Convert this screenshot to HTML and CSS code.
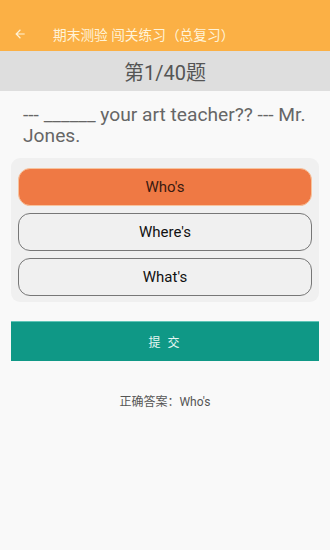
FILE: index.html
```html
<!DOCTYPE html>
<html lang="zh">
<head>
<meta charset="utf-8">
<link rel="stylesheet" href="styles.css">
</head>
<body>
<header class="appbar">
  <svg class="back" width="14" height="14" viewBox="0 0 24 24"><path d="M20 11H7.83l5.59-5.59L12 4l-8 8 8 8 1.41-1.41L7.83 13H20v-2z" fill="#fff3d8"/></svg>
  <span class="title">期末测验 闯关练习（总复习）</span>
</header>
<div class="progress">第1/40题</div>
<main class="content">
  <p class="question">--- ______ your art teacher?? --- Mr. Jones.</p>
  <div class="options">
    <div class="option selected">Who's</div>
    <div class="option">Where's</div>
    <div class="option">What's</div>
  </div>
  <button class="submit">提 交</button>
  <p class="answer">正确答案：Who's</p>
</main>
</body>
</html>
```

FILE: styles.css
```css
html, body { margin: 0; padding: 0; }
body {
  width: 330px;
  height: 550px;
  background: #f9f9f9;
  font-family: Roboto, "Noto Sans CJK SC", sans-serif;
  overflow: hidden;
}
.appbar {
  height: 51px;
  background: #fbb045;
  display: flex;
  align-items: center;
  padding: 0 0 0 13px;
  box-sizing: border-box;
  padding-top: 16px;
}
.back { flex: none; }
.title {
  margin-left: 26px;
  color: #fff3d8;
  font-size: 13.7px;
}
.progress {
  height: 40px;
  background: #dedede;
  color: #555;
  font-size: 20px;
  display: flex;
  align-items: center;
  justify-content: center;
}
.content { padding: 0 11px; }
.question {
  margin: 13px 0 0 12px;
  font-size: 19.2px;
  line-height: 21px;
  color: #666;
}
.options {
  margin-top: 12px;
  background: #f0f0f0;
  border-radius: 9px;
  padding: 10px 7px 6px;
  display: flex;
  flex-direction: column;
  gap: 7px;
}
.option {
  height: 38px;
  box-sizing: border-box;
  border: 1px solid #777;
  border-radius: 12px;
  background: #f0f0f0;
  display: flex;
  align-items: center;
  justify-content: center;
  font-size: 15px;
  color: #111;
}
.option.selected {
  background: #ef7944;
  border-color: #f7c39d;
  color: #3a1a10;
}
.submit {
  display: block;
  width: 100%;
  height: 40px;
  margin-top: 19px;
  border: none;
  border-top: 1px solid #5fc5b8;
  background: #0f9886;
  color: #e6f6f2;
  font-family: inherit;
  font-size: 12px;
  letter-spacing: 2px;
}
.answer {
  margin: 31px 0 0;
  text-align: center;
  font-size: 12px;
  color: #555;
}
```
